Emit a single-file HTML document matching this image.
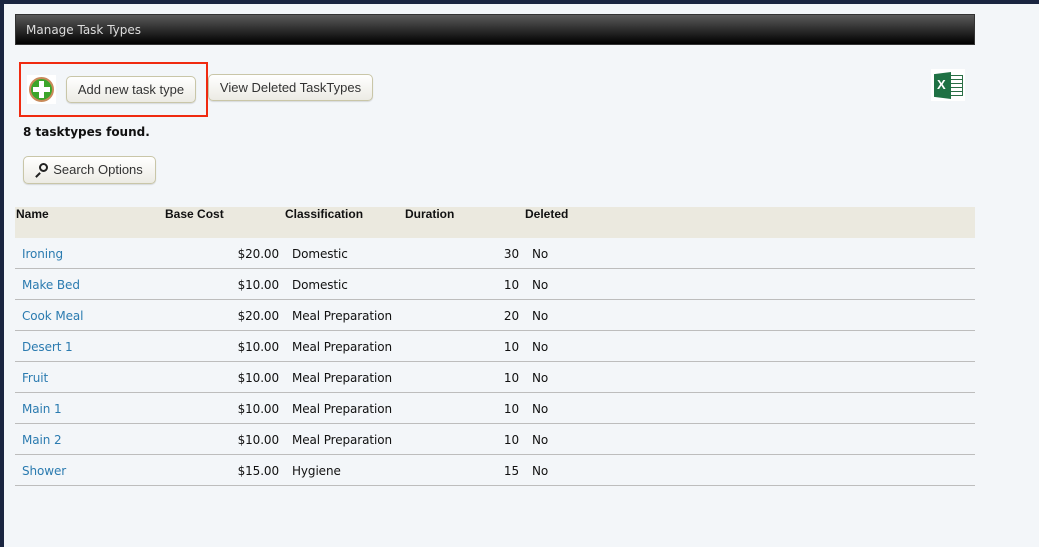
<!DOCTYPE html>
<html><head><style>
*{margin:0;padding:0;box-sizing:border-box}
body{width:1039px;height:547px;background:#f3f6f9;position:relative;overflow:hidden;font-family:"DejaVu Sans","Liberation Sans",sans-serif;font-size:12px;color:#111}
.abs{position:absolute}
.btn{position:absolute;border:1px solid #c9c6a8;border-radius:5px;background:linear-gradient(#ffffff,#ecebe4);font-family:"Liberation Sans",sans-serif;font-size:13px;color:#333;text-align:center;box-shadow:0 1px 1px rgba(0,0,0,.12)}
.th{position:absolute;top:207px;font-family:"Liberation Sans",sans-serif;font-weight:bold;font-size:12px}
.row{position:absolute;left:15px;width:960px;height:31px;border-bottom:1px solid #bdbdbd}
.row span{position:absolute;top:9px;font-size:12px;letter-spacing:-0.1px}
.n{left:7px;color:#2b7bb0}
.c{right:696px;text-align:right}
.k{left:277px}
.d{right:456px;text-align:right}
.x{left:517px}
</style></head><body>
<div class="abs" style="left:0;top:0;width:1039px;height:4px;background:#1a2540"></div>
<div class="abs" style="left:0;top:0;width:4px;height:547px;background:#1a2540"></div>
<div class="abs" style="left:15px;top:14px;width:960px;height:31px;background:linear-gradient(#5a5a5a,#000);border:1px solid #333"></div>
<div class="abs" style="left:26px;top:23px;color:#ddd;font-size:12px">Manage Task Types</div>

<div class="abs" style="left:19px;top:62px;width:189px;height:55px;border:2px solid #f02a10"></div>
<div class="abs" style="left:27px;top:75px;width:29px;height:29px;background:#fff"></div>
<div class="abs" style="left:29px;top:77px;width:25px;height:25px;border-radius:50%;background:#3ca52a;border:2px solid #c98a5a"></div>
<div class="abs" style="left:39px;top:81px;width:5px;height:17px;background:#fff"></div>
<div class="abs" style="left:33px;top:87px;width:17px;height:5px;background:#fff"></div>
<div class="btn" style="left:66px;top:76px;width:130px;height:27px;line-height:25px">Add new task type</div>
<div class="btn" style="left:208px;top:74px;width:165px;height:27px;line-height:25px">View Deleted TaskTypes</div>

<div class="abs" style="left:931px;top:69px;width:34px;height:32px;background:#fff"></div>
<div class="abs" style="left:950px;top:75px;width:13px;height:21px;background:#fff;border:1px solid #2a6e45;background-image:repeating-linear-gradient(#fff 0 3px,#2a6e45 3px 4px)"></div>
<div class="abs" style="left:934px;top:72px;width:17px;height:27px;background:#1f7144;clip-path:polygon(0 8%,100% 0,100% 100%,0 92%)"></div>
<div class="abs" style="left:937px;top:77px;color:#fff;font-weight:bold;font-size:13px;font-family:'Liberation Sans',sans-serif">X</div>

<div class="abs" style="left:23px;top:125px;font-weight:bold;font-size:12px">8 tasktypes found.</div>
<div class="btn" style="left:23px;top:156px;width:133px;height:28px;line-height:26px"><span style="display:inline-block;width:17px"></span>Search Options</div>
<div class="abs" style="left:39px;top:163px;width:9px;height:9px;border:2px solid #222;border-radius:50%"></div>
<div class="abs" style="left:35px;top:174px;width:6px;height:2px;background:#222;transform:rotate(-45deg)"></div>

<div class="abs" style="left:15px;top:207px;width:960px;height:31px;background:#ebe9df"></div>
<div class="th" style="left:16px">Name</div>
<div class="th" style="left:165px">Base Cost</div>
<div class="th" style="left:285px">Classification</div>
<div class="th" style="left:405px">Duration</div>
<div class="th" style="left:525px">Deleted</div>

<div class="row" style="top:238px"><span class="n">Ironing</span><span class="c">$20.00</span><span class="k">Domestic</span><span class="d">30</span><span class="x">No</span></div>
<div class="row" style="top:269px"><span class="n">Make Bed</span><span class="c">$10.00</span><span class="k">Domestic</span><span class="d">10</span><span class="x">No</span></div>
<div class="row" style="top:300px"><span class="n">Cook Meal</span><span class="c">$20.00</span><span class="k">Meal Preparation</span><span class="d">20</span><span class="x">No</span></div>
<div class="row" style="top:331px"><span class="n">Desert 1</span><span class="c">$10.00</span><span class="k">Meal Preparation</span><span class="d">10</span><span class="x">No</span></div>
<div class="row" style="top:362px"><span class="n">Fruit</span><span class="c">$10.00</span><span class="k">Meal Preparation</span><span class="d">10</span><span class="x">No</span></div>
<div class="row" style="top:393px"><span class="n">Main 1</span><span class="c">$10.00</span><span class="k">Meal Preparation</span><span class="d">10</span><span class="x">No</span></div>
<div class="row" style="top:424px"><span class="n">Main 2</span><span class="c">$10.00</span><span class="k">Meal Preparation</span><span class="d">10</span><span class="x">No</span></div>
<div class="row" style="top:455px"><span class="n">Shower</span><span class="c">$15.00</span><span class="k">Hygiene</span><span class="d">15</span><span class="x">No</span></div>
</body></html>
